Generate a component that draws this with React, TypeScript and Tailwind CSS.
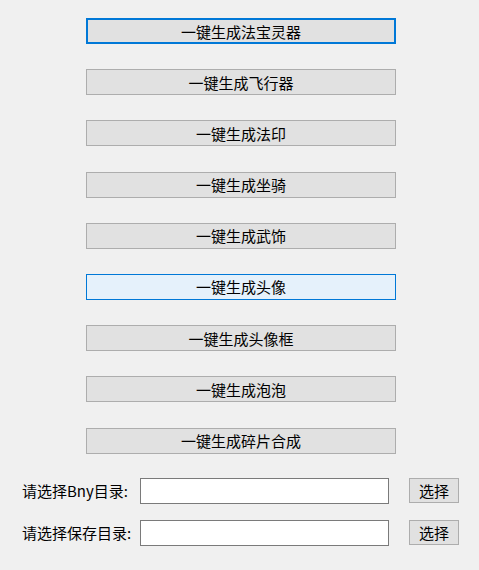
import { type ReactElement } from "react";

const actions = [
  "一键生成法宝灵器",
  "一键生成飞行器",
  "一键生成法印",
  "一键生成坐骑",
  "一键生成武饰",
  "一键生成头像",
  "一键生成头像框",
  "一键生成泡泡",
  "一键生成碎片合成",
];

const font = "font-['Microsoft_YaHei','Noto_Sans_CJK_SC',sans-serif]";

const ActionButton = ({ label, state }: { label: string; state?: "focus" | "hover" }): ReactElement => {
  const look =
    state === "focus"
      ? "border-2 border-[#0078d7] bg-[#e1e1e1]"
      : state === "hover"
        ? "border border-[#0078d7] bg-[#e5f1fb]"
        : "border border-[#adadad] bg-[#e1e1e1]";
  return (
    <button
      className={`w-[310px] h-[26px] flex items-center justify-center text-[15px] text-black leading-none ${look}`}
    >
      {label}
    </button>
  );
};

const PathRow = ({ label }: { label: string }): ReactElement => (
  <div className="flex items-center h-[26px]">
    <span className="w-[140px] pl-[22px] text-[15px] leading-none text-black whitespace-nowrap">{label}</span>
    <input className="w-[249px] h-[26px] bg-white border border-[#7a7a7a] outline-none" />
    <button className="ml-[20px] w-[50px] h-[25px] border border-[#adadad] bg-[#e1e1e1] text-[15px] leading-none text-black">
      选择
    </button>
  </div>
);

export default function App(): ReactElement {
  return (
    <div className={`w-[479px] h-[570px] bg-[#f0f0f0] ${font}`}>
      <div className="flex flex-col items-start pl-[86px] pt-[18px] gap-[25.2px]">
        {actions.map((label, i) => (
          <ActionButton key={label} label={label} state={i === 0 ? "focus" : i === 5 ? "hover" : undefined} />
        ))}
      </div>
      <div className="flex flex-col mt-[24px] gap-[16px]">
        <PathRow label="请选择Bny目录:" />
        <PathRow label="请选择保存目录:" />
      </div>
    </div>
  );
}
